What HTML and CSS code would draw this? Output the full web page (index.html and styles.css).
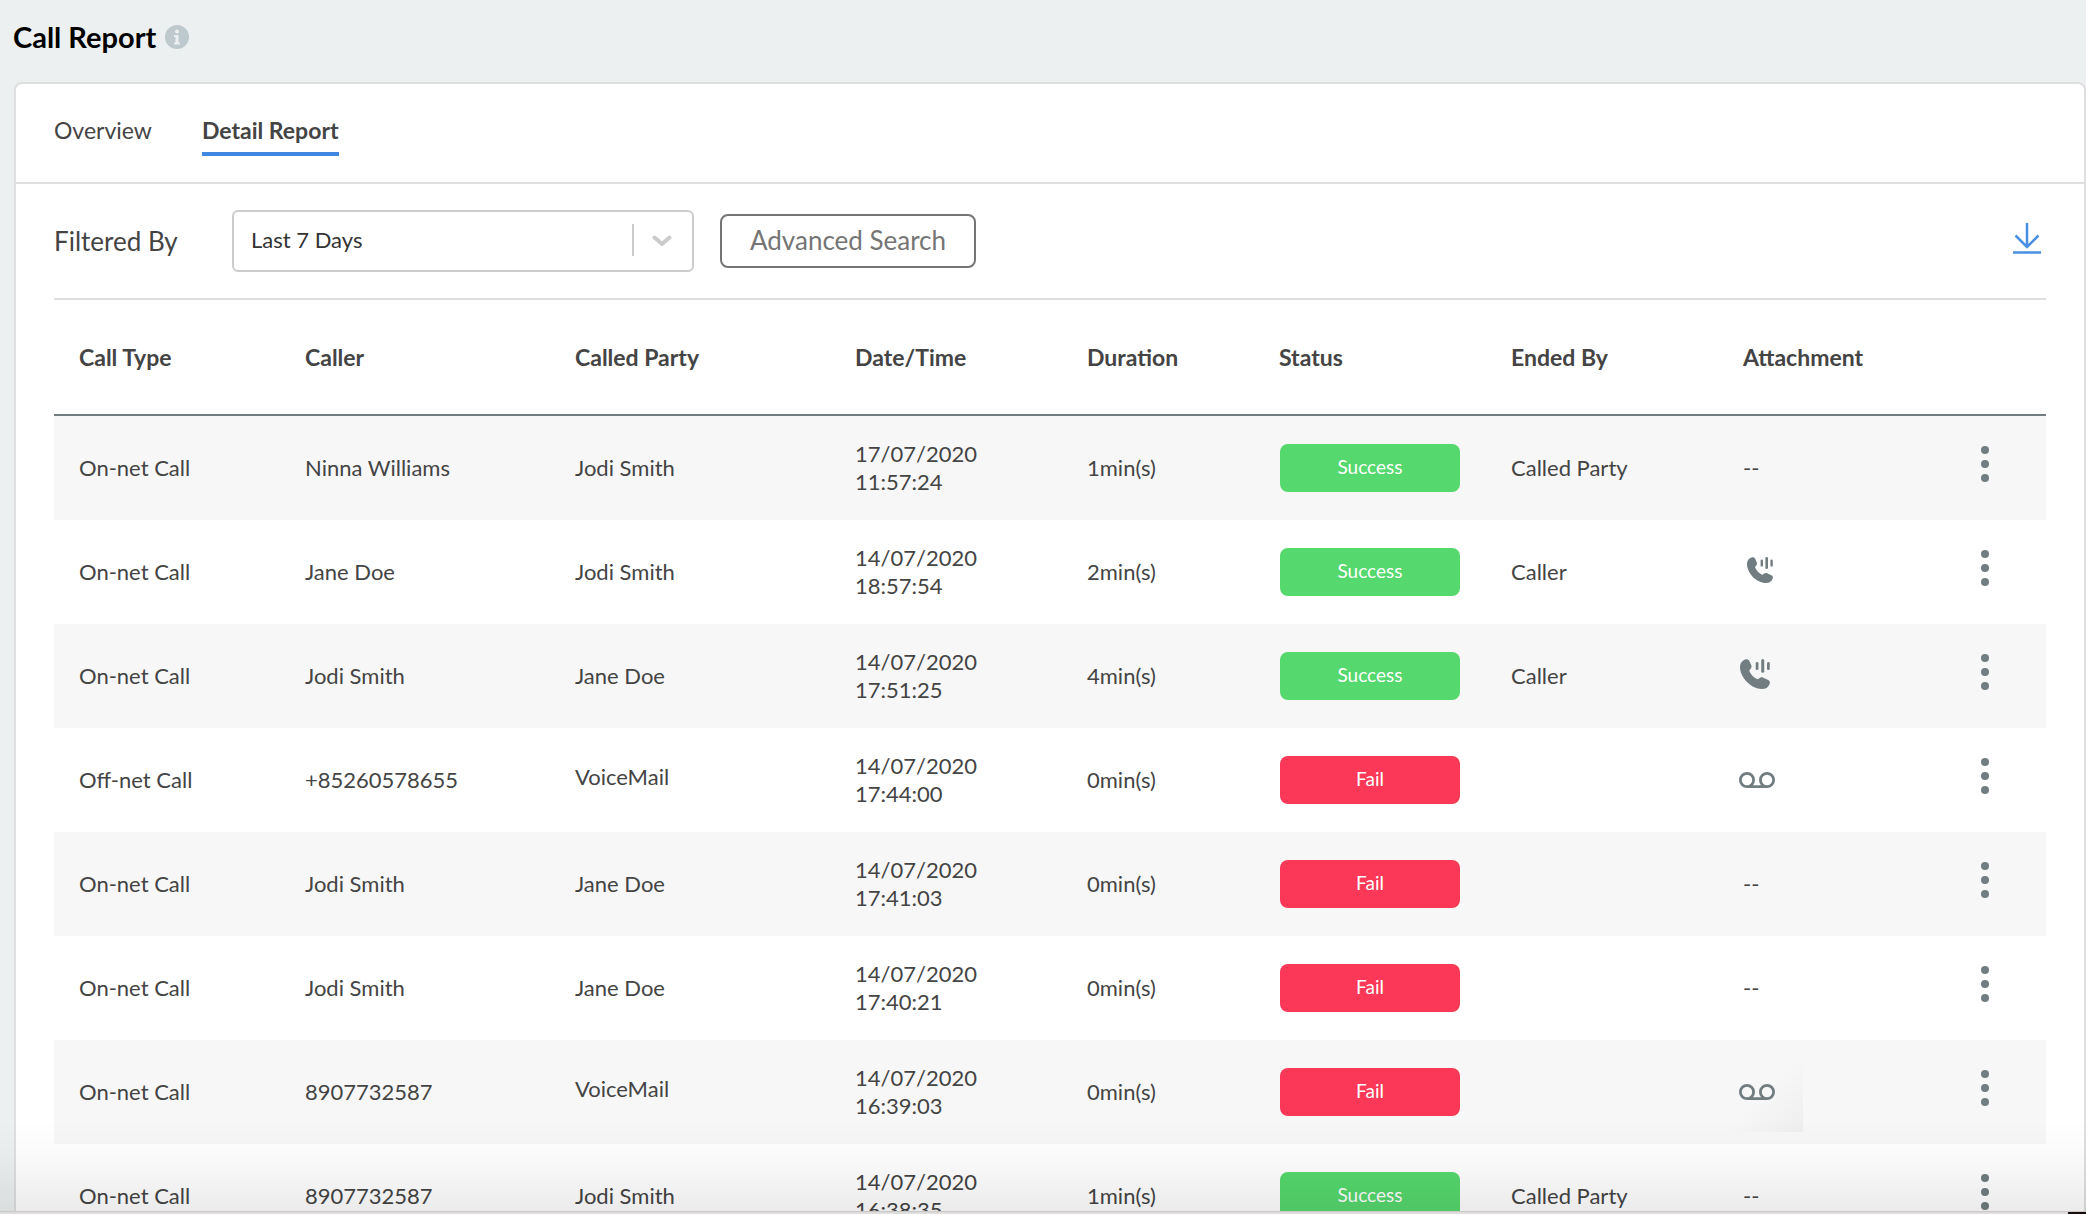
FILE: index.html
```html
<!DOCTYPE html>
<html lang="en">
<head>
  <meta charset="UTF-8">
  <title>Call Report</title>
  <link rel="stylesheet" href="styles.css">
</head>
<body>
  <!-- shared icons -->
  <svg class="sprite" aria-hidden="true">
    <symbol id="icon-call" viewBox="0 0 26 26">
      <path d="M3.200 1C5.200-.2 7.200 0 8 1.600L9.800 5.400C10.400 6.900 9.700 8 8.600 9.200C8 10 8.100 10.500 8.600 11.400C10 13.800 12 16 14.600 17.400C15.300 17.800 15.800 17.700 16.500 17C17.600 16 18.900 15.600 20.200 16.200L24.400 18.200C26 19 26.200 20.400 25.600 21.800C24.500 24.600 22.200 26 19 26C9.500 26 0 16 0 7C0 4.200 1.200 2.200 3.200 1Z"/>
      <rect x="13.600" y="2.600" width="2.400" height="7" rx="1.200"/>
      <rect x="18.400" y="0" width="2.600" height="12" rx="1.300"/>
      <rect x="23.400" y="2.600" width="2.400" height="7" rx="1.200"/>
    </symbol>
    <symbol id="icon-voicemail" viewBox="0 0 36 16">
      <path fill="none" stroke="currentColor" stroke-width="2.800" d="M8 14.600A6.600 6.600 0 1 1 8 1.400A6.600 6.600 0 1 1 8 14.600H28A6.600 6.600 0 1 1 28 1.400A6.600 6.600 0 1 1 28 14.600"/>
    </symbol>
    <symbol id="icon-dots" viewBox="0 0 8 36">
      <circle cx="4" cy="4" r="4"/>
      <circle cx="4" cy="18" r="4"/>
      <circle cx="4" cy="32" r="4"/>
    </symbol>
  </svg>

  <header class="page-header">
    <h1>Call Report</h1>
    <svg class="info" viewBox="0 0 24 24">
      <circle cx="12" cy="12" r="12" fill="#bdc9cd"/>
      <circle cx="12" cy="6.500" r="2" fill="#ecf0f1"/>
      <path d="M9 10H13.500V17.500H15V19.500H9V17.500H10.500V12H9Z" fill="#ecf0f1"/>
    </svg>
  </header>

  <main class="card">
    <nav class="tabs">
      <a href="#overview">Overview</a>
      <a href="#detail" class="active">Detail Report</a>
    </nav>

    <div class="content">
      <div class="filters">
        <label for="range">Filtered By</label>
        <div class="select">
          <select id="range">
            <option>Last 7 Days</option>
            <option>Last 30 Days</option>
          </select>
          <span class="divider"></span>
          <svg class="chevron" viewBox="0 0 20 12"><path d="M2.500 2.500L10 9L17.500 2.500"/></svg>
        </div>
        <button type="button" class="advanced">Advanced Search</button>
        <button type="button" class="download" aria-label="Download">
          <svg viewBox="0 0 28 32"><path d="M14 0V24M2.500 12.500L14 24L25.500 12.500M0 29.500H28"/></svg>
        </button>
      </div>

      <table>
        <colgroup>
          <col class="c-type"><col class="c-caller"><col class="c-called"><col class="c-date">
          <col class="c-duration"><col class="c-status"><col class="c-ended"><col class="c-attach"><col class="c-more">
        </colgroup>
        <thead>
          <tr>
            <th>Call Type</th>
            <th>Caller</th>
            <th>Called Party</th>
            <th>Date/Time</th>
            <th>Duration</th>
            <th>Status</th>
            <th>Ended By</th>
            <th>Attachment</th>
            <th></th>
          </tr>
        </thead>
        <tbody>
          <tr>
            <td>On-net Call</td>
            <td>Ninna Williams</td>
            <td>Jodi Smith</td>
            <td>17/07/2020<br>11:57:24</td>
            <td>1min(s)</td>
            <td><span class="badge success">Success</span></td>
            <td>Called Party</td>
            <td>--</td>
            <td class="more"><button type="button" aria-label="More"><svg><use href="#icon-dots"/></svg></button></td>
          </tr>
          <tr>
            <td>On-net Call</td>
            <td>Jane Doe</td>
            <td>Jodi Smith</td>
            <td>14/07/2020<br>18:57:54</td>
            <td>2min(s)</td>
            <td><span class="badge success">Success</span></td>
            <td>Caller</td>
            <td><svg class="call small"><use href="#icon-call"/></svg></td>
            <td class="more"><button type="button" aria-label="More"><svg><use href="#icon-dots"/></svg></button></td>
          </tr>
          <tr>
            <td>On-net Call</td>
            <td>Jodi Smith</td>
            <td>Jane Doe</td>
            <td>14/07/2020<br>17:51:25</td>
            <td>4min(s)</td>
            <td><span class="badge success">Success</span></td>
            <td>Caller</td>
            <td><svg class="call"><use href="#icon-call"/></svg></td>
            <td class="more"><button type="button" aria-label="More"><svg><use href="#icon-dots"/></svg></button></td>
          </tr>
          <tr>
            <td>Off-net Call</td>
            <td>+85260578655</td>
            <td class="voicemail">VoiceMail</td>
            <td>14/07/2020<br>17:44:00</td>
            <td>0min(s)</td>
            <td><span class="badge fail">Fail</span></td>
            <td></td>
            <td><svg class="tape"><use href="#icon-voicemail"/></svg></td>
            <td class="more"><button type="button" aria-label="More"><svg><use href="#icon-dots"/></svg></button></td>
          </tr>
          <tr>
            <td>On-net Call</td>
            <td>Jodi Smith</td>
            <td>Jane Doe</td>
            <td>14/07/2020<br>17:41:03</td>
            <td>0min(s)</td>
            <td><span class="badge fail">Fail</span></td>
            <td></td>
            <td>--</td>
            <td class="more"><button type="button" aria-label="More"><svg><use href="#icon-dots"/></svg></button></td>
          </tr>
          <tr>
            <td>On-net Call</td>
            <td>Jodi Smith</td>
            <td>Jane Doe</td>
            <td>14/07/2020<br>17:40:21</td>
            <td>0min(s)</td>
            <td><span class="badge fail">Fail</span></td>
            <td></td>
            <td>--</td>
            <td class="more"><button type="button" aria-label="More"><svg><use href="#icon-dots"/></svg></button></td>
          </tr>
          <tr>
            <td>On-net Call</td>
            <td>8907732587</td>
            <td class="voicemail">VoiceMail</td>
            <td>14/07/2020<br>16:39:03</td>
            <td>0min(s)</td>
            <td><span class="badge fail">Fail</span></td>
            <td></td>
            <td class="shaded"><svg class="tape"><use href="#icon-voicemail"/></svg></td>
            <td class="more"><button type="button" aria-label="More"><svg><use href="#icon-dots"/></svg></button></td>
          </tr>
          <tr>
            <td>On-net Call</td>
            <td>8907732587</td>
            <td>Jodi Smith</td>
            <td>14/07/2020<br>16:38:35</td>
            <td>1min(s)</td>
            <td><span class="badge success">Success</span></td>
            <td>Called Party</td>
            <td>--</td>
            <td class="more"><button type="button" aria-label="More"><svg><use href="#icon-dots"/></svg></button></td>
          </tr>
        </tbody>
      </table>
    </div>
  </main>

  <div class="bottom-shade"></div>
</body>
</html>
```

FILE: styles.css
```css
* {
  box-sizing: border-box;
}

body {
  margin: 0;
  height: 100vh;
  overflow: hidden;
  background: #ecf0f1;
  color: #444;
  font-family: Lato, "Open Sans", sans-serif;
  font-size: 22px;
  line-height: 28px;
}

button {
  font-family: inherit;
  background: none;
  cursor: pointer;
}

.sprite {
  display: none;
}

.page-header {
  display: flex;
  align-items: center;
  gap: 9px;
  height: 82px;
  padding: 0 13px 8px;
}

.page-header h1 {
  margin: 0;
  color: #000;
  font-size: 29px;
  font-weight: 700;
  line-height: 36px;
}

.info {
  width: 24px;
  height: 24px;
}

.card {
  margin-left: 14px;
  background: #fff;
  border: 2px solid #dfdfdf;
  border-radius: 8px;
}

.tabs {
  display: flex;
  gap: 50px;
  height: 100px;
  padding: 32px 38px 0;
  border-bottom: 2px solid #dfdfdf;
  font-size: 23px;
}

.tabs a {
  height: 40px;
  color: #444;
  text-decoration: none;
}

.tabs .active {
  font-weight: 700;
  border-bottom: 4px solid #3f87e0;
}

.content {
  padding: 0 38px;
}

.filters {
  display: flex;
  align-items: center;
  height: 116px;
  border-bottom: 2px solid #dfdfdf;
}

.filters label {
  width: 178px;
  font-size: 26px;
}

.select {
  position: relative;
  width: 462px;
  height: 62px;
  margin-right: 26px;
}

.select select {
  width: 100%;
  height: 100%;
  padding: 0 17px 3px;
  appearance: none;
  background: #fff;
  border: 2px solid #ccc;
  border-radius: 6px;
  color: #333;
  font-family: inherit;
  font-size: 22px;
}

.divider {
  position: absolute;
  top: 14px;
  right: 60px;
  width: 2px;
  height: 32px;
  background: #ccc;
}

.chevron {
  position: absolute;
  top: 25px;
  right: 22px;
  width: 20px;
  height: 12px;
  fill: none;
  stroke: #ccc;
  stroke-width: 4;
  stroke-linecap: round;
  stroke-linejoin: round;
}

.advanced {
  width: 256px;
  height: 54px;
  padding: 0 0 2px;
  border: 2px solid #757575;
  border-radius: 8px;
  color: #757575;
  font-size: 26px;
}

.download {
  margin-left: auto;
  padding: 0 5px 4px;
  border: 0;
}

.download svg {
  display: block;
  width: 28px;
  height: 32px;
  fill: none;
  stroke: #4a90e2;
  stroke-width: 2.5;
}

table {
  width: 100%;
  table-layout: fixed;
  border-collapse: separate;
  border-spacing: 0;
}

/* column widths share the row in proportion */
.c-type { width: 226px; }
.c-caller { width: 270px; }
.c-called { width: 280px; }
.c-date { width: 232px; }
.c-duration { width: 192px; }
.c-status { width: 232px; }
.c-ended { width: 232px; }
.c-attach { width: 206px; }
.c-more { width: 122px; }

th {
  height: 116px;
  padding: 0 0 0 25px;
  border-bottom: 2px solid #717d80;
  font-size: 23px;
  font-weight: 700;
  text-align: left;
}

td {
  height: 104px;
  padding: 0 0 0 25px;
}

tbody tr:nth-child(odd) {
  background: #f7f7f7;
}

.badge {
  display: block;
  width: 180px;
  height: 48px;
  margin-left: 1px;
  border-radius: 8px;
  color: #fff;
  font-size: 19px;
  line-height: 46px;
  text-align: center;
}

.success {
  background: #55d86d;
}

.fail {
  background: #fc3859;
}

.voicemail {
  padding-bottom: 7px;
}

td svg {
  display: block;
  color: #717d80;
  fill: #717d80;
}

.call {
  width: 30px;
  height: 30px;
  margin: 0 0 4px -3px;
}

.call.small {
  width: 26px;
  height: 26px;
  margin-left: 4px;
}

.tape {
  width: 36px;
  height: 16px;
  margin-left: -4px;
}

.shaded {
  background: linear-gradient(135deg, transparent 50%, rgba(0, 0, 0, 0.04)) 0 24px / 85px 68px no-repeat;
}

.more {
  padding: 0;
  text-align: center;
}

.more button {
  padding: 0 8px 8px;
  border: 0;
}

.more svg {
  width: 8px;
  height: 36px;
}

/* fade and window edge along the bottom of the screen */
.bottom-shade {
  position: fixed;
  right: 0;
  bottom: 0;
  left: 0;
  height: 94px;
  background: linear-gradient(rgba(0, 0, 0, 0), rgba(0, 0, 0, 0.02) 40%, rgba(0, 0, 0, 0.08));
  border-bottom: 2px solid #e0dcda;
  box-shadow: inset 0 -1px #c8c8c8;
  pointer-events: none;
}

.bottom-shade::after {
  content: "";
  position: absolute;
  right: 0;
  bottom: -2px;
  width: 18px;
  height: 2px;
  background: #1a0c0a;
}
```
